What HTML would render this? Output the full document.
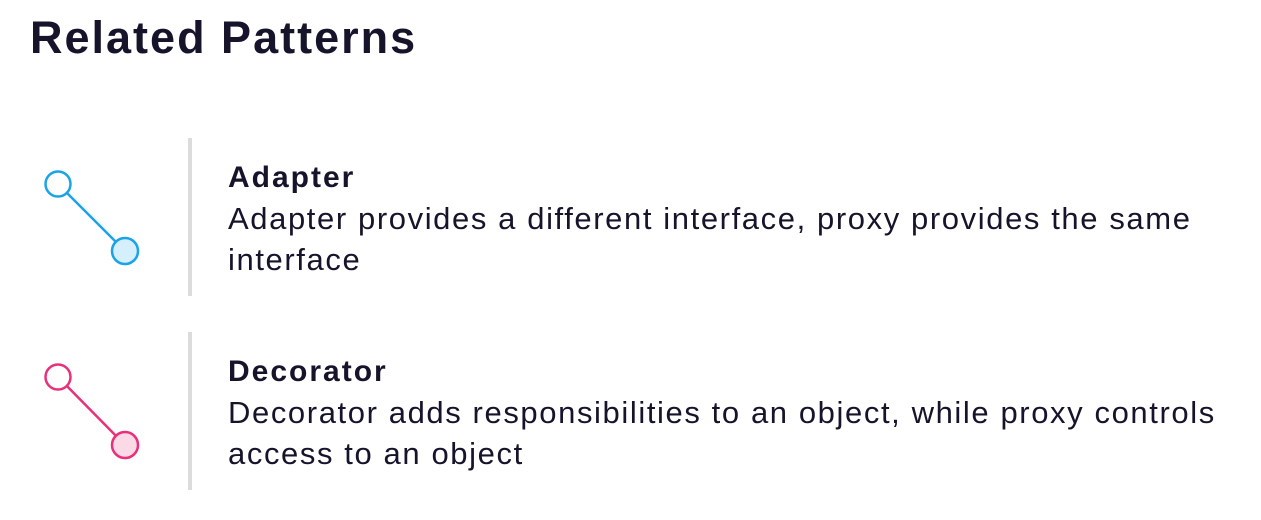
<!DOCTYPE html>
<html><head><meta charset="utf-8"><style>
body{margin:0;width:1261px;height:520px;background:#fff;overflow:hidden;position:relative;font-family:"Liberation Sans",sans-serif;color:#16142b}
h1{position:absolute;left:30px;top:10px;margin:0;font-size:45px;font-weight:bold;letter-spacing:2px;line-height:56px}
.bar{position:absolute;left:188px;width:4px;background:#dcdcdc}
.t{position:absolute;left:228px;font-size:31px;line-height:41px;white-space:nowrap;letter-spacing:1.6px}
.t b{display:block;font-size:30px;letter-spacing:2px}
svg{position:absolute;left:0;top:0}
</style></head><body>
<h1>Related Patterns</h1>
<svg width="1261" height="520">
<line x1="58" y1="184" x2="125" y2="251" stroke="#1aa3e8" stroke-width="2.5"/>
<circle cx="58" cy="184" r="12.5" fill="#fff" stroke="#1aa3e8" stroke-width="2.5"/>
<circle cx="125" cy="251" r="13" fill="#d6effd" stroke="#1aa3e8" stroke-width="2.5"/>
<line x1="58" y1="377" x2="125" y2="445" stroke="#e8317a" stroke-width="2.5"/>
<circle cx="58" cy="377" r="12.5" fill="#fff" stroke="#e8317a" stroke-width="2.5"/>
<circle cx="125" cy="445" r="13" fill="#fbd9e6" stroke="#e8317a" stroke-width="2.5"/>
</svg>
<div class="bar" style="top:138px;height:158px"></div>
<div class="bar" style="top:332px;height:158px"></div>
<div class="t" style="top:157px"><b>Adapter</b>Adapter provides a different interface, proxy provides the same<br>interface</div>
<div class="t" style="top:351px"><b>Decorator</b>Decorator adds responsibilities to an object, while proxy controls<br>access to an object</div>
</body></html>
